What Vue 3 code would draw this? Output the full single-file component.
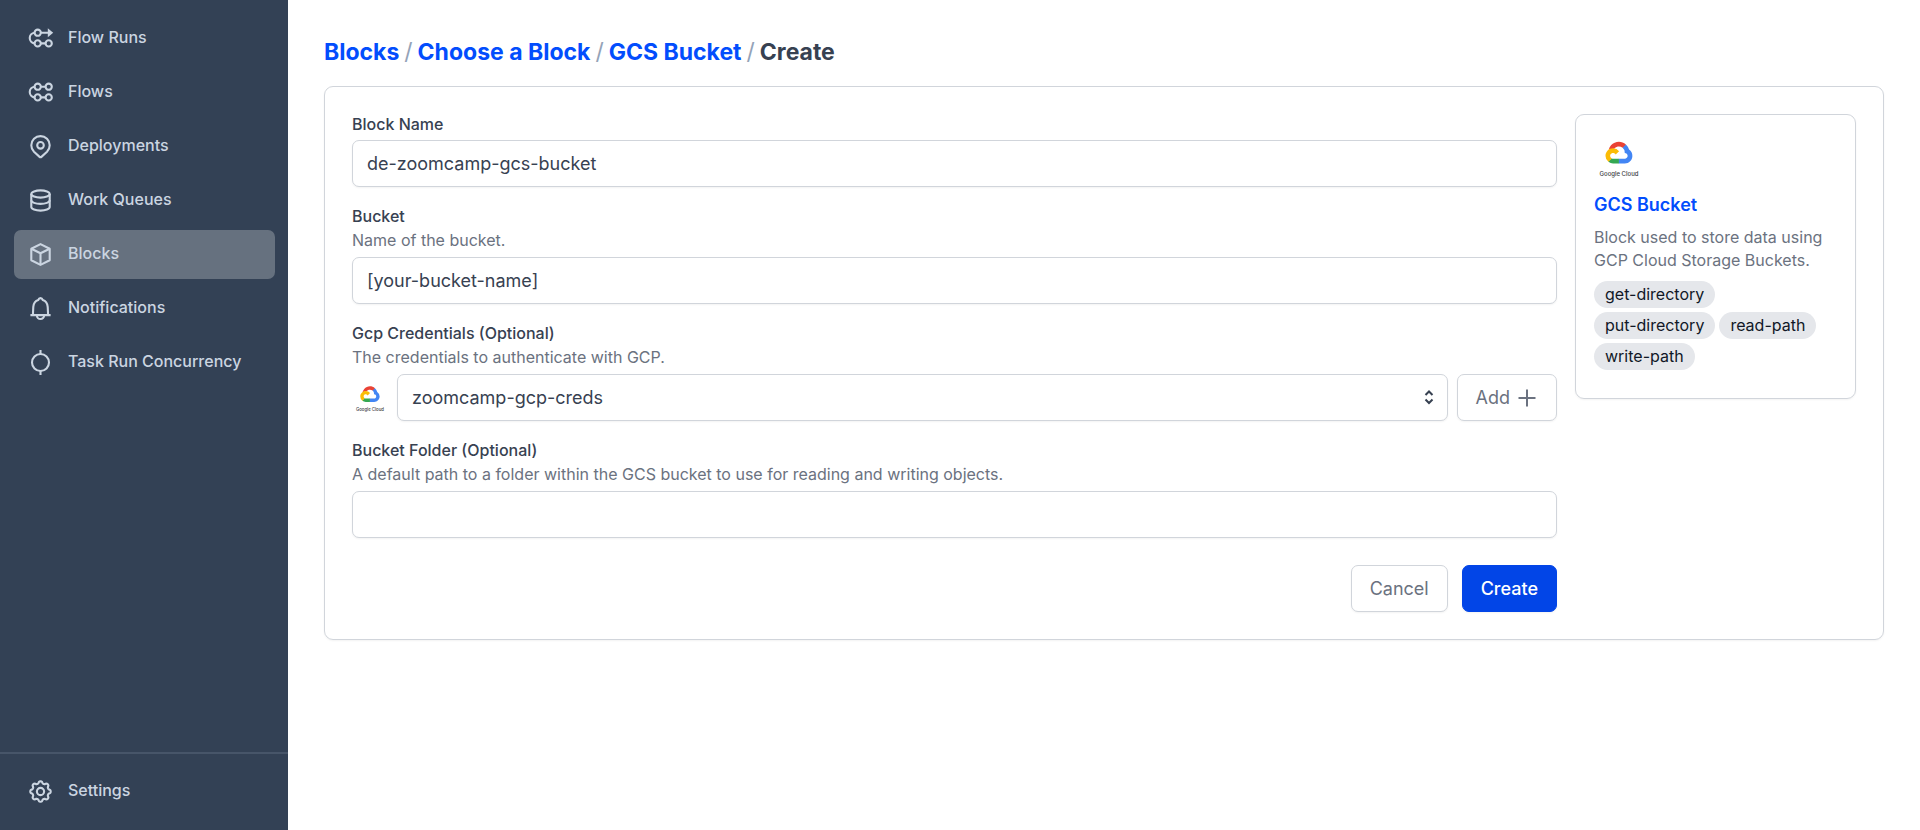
<script setup>
import { ref, h } from 'vue'

const blockName = ref('de-zoomcamp-gcs-bucket')
const bucket = ref('[your-bucket-name]')
const credentials = ref('zoomcamp-gcp-creds')
const bucketFolder = ref('')

const capabilities = ['get-directory', 'put-directory', 'read-path', 'write-path']

// Icons are drawn on a 27 x 27 grid.
const icons = {
  flowRuns: [
    'M7.4 7.7A5.4 5.4 0 0 0 7.4 18.4',
    'M13.8 7.7a3.1 3.1 0 1 1-6.2 0a3.1 3.1 0 0 1 6.2 0z',
    'M13.8 18.4a3.1 3.1 0 1 1-6.2 0a3.1 3.1 0 0 1 6.2 0z',
    'M24.8 18.4a3.1 3.1 0 1 1-6.2 0a3.1 3.1 0 0 1 6.2 0z',
    'M13.8 18.4h4.8M13.8 7.7h7.2',
  ],
  flows: [
    'M7.4 7.7A5.4 5.4 0 0 0 7.4 18.4',
    'M13.8 7.7a3.1 3.1 0 1 1-6.2 0a3.1 3.1 0 0 1 6.2 0z',
    'M24.8 7.7a3.1 3.1 0 1 1-6.2 0a3.1 3.1 0 0 1 6.2 0z',
    'M13.8 18.4a3.1 3.1 0 1 1-6.2 0a3.1 3.1 0 0 1 6.2 0z',
    'M24.8 18.4a3.1 3.1 0 1 1-6.2 0a3.1 3.1 0 0 1 6.2 0z',
    'M13.8 7.7h4.8M13.8 18.4h4.8',
  ],
  deployments: [
    'M20 18.8L14.7 23.6a1.8 1.8 0 0 1-2.4 0L7 18.8a9.2 9.2 0 1 1 13 0z',
    'M16.8 12.3a3.3 3.3 0 1 1-6.6 0a3.3 3.3 0 0 1 6.6 0z',
  ],
  queues: [
    'M4.3 7c0-2.100 4.200-3.600 9.200-3.600s9.200 1.500 9.200 3.600s-4.200 3.600-9.200 3.600s-9.200-1.500-9.200-3.600z',
    'M4.3 7v13c0 2.100 4.200 3.600 9.200 3.600s9.200-1.500 9.200-3.600V7',
    'M4.3 13.300c0 2.100 4.200 3.600 9.200 3.600s9.200-1.500 9.200-3.600',
  ],
  blocks: [
    'M13.5 3.1l9.2 4.600v11.600l-9.200 4.600l-9.200-4.600V7.700z',
    'M4.3 7.700l9.200 4.600l9.200-4.600M13.5 12.300v11.600',
  ],
  notifications: [
    'M3.400 20.100h20.200M6 20v-2.200l.3-6c.3-3.500 2.200-6.100 5-6.900c.4-1.200 1.200-1.800 2.200-1.800s1.800.6 2.200 1.800c2.800.8 4.700 3.400 5 6.900l.3 6V20',
    'M9.900 20.400a3.600 3.600 0 0 0 7.200 0',
  ],
  concurrency: [
    'M22 13.500a8.500 8.500 0 1 1-17 0a8.500 8.500 0 0 1 17 0z',
    'M13.500 1v4M13.500 22v4',
  ],
  settings: [gearOutline(), 'M17.100 13.500a3.600 3.600 0 1 1-7.200 0a3.600 3.600 0 0 1 7.200 0z'],
}

// Closed outline with eight rounded teeth round the grid's centre.
function gearOutline() {
  const steps = 96
  let d = ''
  for (let i = 0; i < steps; i++) {
    const angle = (i / steps) * Math.PI * 2
    const wave = Math.tanh(1.6 * Math.cos(8 * angle))
    const radius = 9.2 + 1.1 * wave
    const x = 13.5 + radius * Math.sin(angle)
    const y = 13.5 - radius * Math.cos(angle)
    d += `${i ? 'L' : 'M'}${x.toFixed(2)} ${y.toFixed(2)}`
  }
  return d + 'z'
}

const navItems = [
  { label: 'Flow Runs', icon: 'flowRuns' },
  { label: 'Flows', icon: 'flows' },
  { label: 'Deployments', icon: 'deployments' },
  { label: 'Work Queues', icon: 'queues' },
  { label: 'Blocks', icon: 'blocks', active: true },
  { label: 'Notifications', icon: 'notifications' },
  { label: 'Task Run Concurrency', icon: 'concurrency' },
]

const NavIcon = ({ name }) =>
  h(
    'svg',
    {
      viewBox: '0 0 27 27',
      fill: 'none',
      stroke: 'currentColor',
      'stroke-width': 2.1,
      'stroke-linejoin': 'round',
      'aria-hidden': 'true',
    },
    [
      ...icons[name].map((d) => h('path', { d })),
      name === 'flowRuns' ? h('path', { d: 'M20.8 3.2l5.400 4.500l-5.400 4.500z', fill: 'currentColor', stroke: 'none' }) : null,
    ],
  )
NavIcon.props = ['name']

const CloudLogo = () =>
  h('svg', { viewBox: '0 0 50 50', role: 'img', 'aria-label': 'Google Cloud' }, [
    h('g', { transform: 'translate(11.500 8.800) scale(.105)' }, [
      h('path', { fill: '#ea4335', d: 'M170.252 56.819l22.253-22.253 1.483-9.37C153.437-11.677 88.976-7.496 52.42 33.92 42.267 45.423 34.734 59.764 30.717 74.573l7.97-1.123 44.505-7.34 3.436-3.513c19.797-21.742 53.27-24.667 76.128-6.168l7.496.39z' }),
      h('path', { fill: '#4285f4', d: 'M224.205 73.918a100.249 100.249 0 0 0-30.217-48.722l-31.232 31.232a55.515 55.515 0 0 1 20.379 44.037v5.544c15.351 0 27.797 12.445 27.797 27.796 0 15.352-12.446 27.485-27.797 27.485h-55.671l-5.466 5.934v33.34l5.466 5.231h55.67c39.93.311 72.553-31.494 72.864-71.424a72.303 72.303 0 0 0-31.793-60.453' }),
      h('path', { fill: '#34a853', d: 'M71.87 205.796h55.593V161.29H71.87a27.275 27.275 0 0 1-11.4-2.498l-7.887 2.42-22.409 22.253-1.952 7.574a71.88 71.88 0 0 0 43.647 14.757' }),
      h('path', { fill: '#fbbc05', d: 'M71.87 61.425C31.94 61.664-.237 94.228.001 134.158a72.301 72.301 0 0 0 28.222 56.88l32.248-32.247c-13.99-6.322-20.208-22.786-13.887-36.776 6.32-13.99 22.786-20.208 36.775-13.888a27.796 27.796 0 0 1 13.887 13.888l32.248-32.248A72.224 72.224 0 0 0 71.87 61.425' }),
    ]),
    h('text', { x: 25, y: 43, 'text-anchor': 'middle', 'font-size': 6, 'font-weight': 500, fill: '#3c4043' }, 'Google Cloud'),
  ])
</script>

<template>
  <div class="layout">
    <nav class="sidebar" aria-label="Main">
      <div class="nav-group">
        <a
          v-for="item in navItems"
          :key="item.label"
          href="#"
          class="nav-item"
          :class="{ active: item.active }"
          :aria-current="item.active ? 'page' : undefined"
        >
          <NavIcon class="nav-icon" :name="item.icon" />
          <span class="nav-label">{{ item.label }}</span>
        </a>
      </div>
      <div class="nav-group nav-footer">
        <a href="#" class="nav-item">
          <NavIcon class="nav-icon" name="settings" />
          <span class="nav-label">Settings</span>
        </a>
      </div>
    </nav>

    <main class="main">
      <h1 class="crumbs">
        <a href="#">Blocks</a><span class="slash">/</span>
        <a href="#">Choose a Block</a><span class="slash">/</span>
        <a href="#">GCS Bucket</a><span class="slash">/</span>
        <span>Create</span>
      </h1>

      <section class="card panel">
        <form class="form" @submit.prevent>
          <div class="field">
            <label for="block-name">Block Name</label>
            <input id="block-name" v-model="blockName" class="control" type="text" />
          </div>

          <div class="field">
            <label for="bucket">Bucket</label>
            <p id="bucket-help" class="help">Name of the bucket.</p>
            <input id="bucket" v-model="bucket" class="control" type="text" aria-describedby="bucket-help" />
          </div>

          <div class="field">
            <label for="credentials">Gcp Credentials (Optional)</label>
            <p id="credentials-help" class="help">The credentials to authenticate with GCP.</p>
            <div class="credentials">
              <CloudLogo class="logo-small" />
              <div class="select-wrap">
                <select id="credentials" v-model="credentials" class="control" aria-describedby="credentials-help">
                  <option>zoomcamp-gcp-creds</option>
                </select>
                <svg class="select-icon" viewBox="0 0 22 22" fill="none" stroke="currentColor" stroke-width="2" aria-hidden="true">
                  <path d="M7.5 9L11 5.500L14.500 9M7.500 13.500L11 17l3.500-3.500" />
                </svg>
              </div>
              <button type="button" class="button add">
                Add
                <svg viewBox="0 0 22 22" fill="none" stroke="currentColor" stroke-width="2" aria-hidden="true">
                  <path d="M11 2.500v17M2.500 11h17" />
                </svg>
              </button>
            </div>
          </div>

          <div class="field">
            <label for="folder">Bucket Folder (Optional)</label>
            <p id="folder-help" class="help">A default path to a folder within the GCS bucket to use for reading and writing objects.</p>
            <input id="folder" v-model="bucketFolder" class="control" type="text" aria-describedby="folder-help" />
          </div>

          <div class="actions">
            <button type="button" class="button">Cancel</button>
            <button type="submit" class="button primary">Create</button>
          </div>
        </form>

        <aside class="card summary">
          <CloudLogo class="logo" />
          <a href="#" class="summary-title">GCS Bucket</a>
          <p class="summary-text">Block used to store data using GCP Cloud Storage Buckets.</p>
          <ul class="tags">
            <li v-for="name in capabilities" :key="name">{{ name }}</li>
          </ul>
        </aside>
      </section>
    </main>
  </div>
</template>

<style>
body {
  margin: 0;
  background: #fff;
}
</style>

<style scoped>
.layout,
.layout * {
  box-sizing: border-box;
}

.layout {
  display: flex;
  min-height: 100vh;
  font-family: Inter, "Liberation Sans", sans-serif;
  font-size: 16px;
  line-height: 22px;
  color: #374151;
}

a {
  text-decoration: none;
}

.sidebar {
  display: flex;
  flex: 0 0 288px;
  flex-direction: column;
  justify-content: space-between;
  background: #334155;
}

.nav-group {
  display: flex;
  flex-direction: column;
  gap: 5px;
  padding: 14px 13px 14px 14px;
}

.nav-footer {
  padding-top: 13px;
  border-top: 2px solid #475569;
}

.nav-item {
  display: flex;
  align-items: center;
  gap: 14px;
  padding: 11px 13px;
  border-radius: 7px;
  color: #cbd5e1;
  font-weight: 500;
}

.nav-item.active {
  background: #66717f;
}

.nav-icon {
  flex: none;
  width: 27px;
  height: 27px;
}

.nav-label {
  padding-bottom: 3px;
}

.main {
  flex: 1;
  min-width: 0;
  padding: 36px;
}

.crumbs {
  display: flex;
  flex-wrap: wrap;
  gap: 5px;
  margin: 0 0 18px;
  font-size: 23px;
  line-height: 32px;
  font-weight: 700;
}

.crumbs a,
.summary-title {
  color: #024dfd;
}

.slash {
  color: #94a3b8;
  font-weight: 400;
}

.card {
  border: 1px solid #d1d5db;
  border-radius: 9px;
  box-shadow: 0 1px 2px rgba(0, 0, 0, 0.05);
}

.panel {
  display: flex;
  align-items: flex-start;
  gap: 18px;
  padding: 27px;
}

.form {
  display: flex;
  flex: 1;
  flex-direction: column;
  gap: 19px;
  min-width: 0;
}

.field label {
  display: block;
  margin-bottom: 6px;
  line-height: 20px;
  font-weight: 500;
}

.field label:has(+ .help) {
  margin-bottom: 3px;
}

.help {
  margin: 0 0 6px;
  color: #6b7280;
}

.control {
  display: block;
  width: 100%;
  height: 47px;
  padding: 0 14px;
  border: 1px solid #d1d5db;
  border-radius: 7px;
  background: #fff;
  box-shadow: 0 1px 2px rgba(0, 0, 0, 0.05);
  color: #374151;
  font-family: inherit;
  font-size: 18px;
  appearance: none;
}

.credentials {
  display: flex;
  align-items: center;
  gap: 9px;
}

.logo-small {
  flex: none;
  width: 36px;
  height: 36px;
}

.select-wrap {
  position: relative;
  flex: 1;
}

.select-icon {
  position: absolute;
  top: 12px;
  right: 8px;
  width: 22px;
  height: 22px;
  pointer-events: none;
}

.button {
  display: flex;
  align-items: center;
  justify-content: center;
  gap: 6px;
  height: 47px;
  padding: 0 18px;
  border: 1px solid #d1d5db;
  border-radius: 7px;
  background: #fff;
  box-shadow: 0 1px 2px rgba(0, 0, 0, 0.05);
  color: #6b7280;
  font-family: inherit;
  font-size: 18px;
}

.button svg {
  width: 22px;
  height: 22px;
}

.primary {
  border-color: #0245e7;
  background: #0245e7;
  color: #fff;
  font-weight: 500;
}

.actions {
  display: flex;
  justify-content: flex-end;
  gap: 14px;
  padding-top: 8px;
}

.summary {
  flex: 0 0 281px;
  padding: 18px 18px 28px;
}

.logo {
  display: block;
  width: 50px;
  height: 50px;
  margin-bottom: 8px;
}

.summary-title {
  display: block;
  font-size: 18px;
  line-height: 28px;
  font-weight: 600;
}

.summary-text {
  margin: 7px 0 9px;
  line-height: 23px;
  color: #6b7280;
}

.tags {
  display: flex;
  flex-wrap: wrap;
  gap: 4px;
  margin: 0;
  padding: 0;
  list-style: none;
}

.tags li {
  padding: 0 11px;
  border-radius: 14px;
  background: #e5e7eb;
  color: #111827;
  line-height: 27px;
}
</style>
